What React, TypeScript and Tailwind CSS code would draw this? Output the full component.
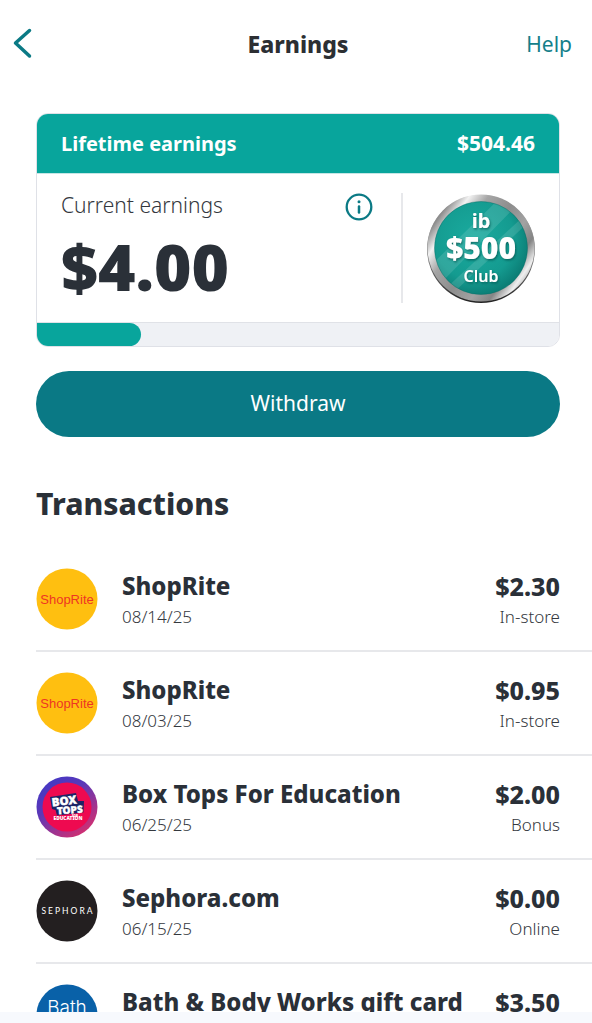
import type { ReactNode } from "react";

type Transaction = {
  id: number;
  name: string;
  date: string;
  amount: string;
  kind: string;
  logo: ReactNode;
};

function ShopRiteLogo() {
  return (
    <svg viewBox="0 0 62 62" className="size-full" aria-hidden="true">
      <circle cx="31" cy="31" r="30.5" fill="#ffbf10" />
      <text x="31" y="35.500" textAnchor="middle" fontFamily="'Liberation Sans Narrow', 'Liberation Sans', sans-serif" fontSize="13" fill="#ee3524">
        ShopRite
      </text>
    </svg>
  );
}

function BoxTopsLogo() {
  return (
    <svg viewBox="0 0 62 62" className="size-full" aria-hidden="true">
      <defs>
        <linearGradient id="boxtops-ring" x1="0.15" y1="0.1" x2="0.75" y2="0.95">
          <stop offset="0" stopColor="#4638c4" />
          <stop offset="0.35" stopColor="#5b38b8" />
          <stop offset="1" stopColor="#d02f72" />
        </linearGradient>
      </defs>
      <circle cx="31" cy="31" r="30.5" fill="url(#boxtops-ring)" />
      <circle cx="31" cy="31" r="24.5" fill="#ee0a50" />
      <path d="M14 21 L40 17 L42 25 L48 25 L47.500 36.500 L21 39.500 L19.500 34 L16 33 Z" fill="#1c2466" />
      <g fontFamily="'Noto Sans', sans-serif" fontWeight="900" fill="#ffffff" textAnchor="middle">
        <text x="28.500" y="29" fontSize="11.500" stroke="#ffffff" strokeWidth="0.4" transform="rotate(-7 28 28)">
          BOX
        </text>
        <text x="34" y="37.500" fontSize="10" stroke="#ffffff" strokeWidth="0.4" transform="rotate(-4 34 37)">
          TOPS
        </text>
        <text x="39" y="40.500" fontSize="3">
          FOR
        </text>
        <text x="32" y="44" fontSize="4.800">
          EDUCATION
        </text>
      </g>
    </svg>
  );
}

function SephoraLogo() {
  return (
    <svg viewBox="0 0 62 62" className="size-full" aria-hidden="true">
      <circle cx="31" cy="31" r="30.5" fill="#231f20" />
      <text x="32" y="34" textAnchor="middle" fontFamily="Lato, sans-serif" fontSize="8.500" letterSpacing="2" fill="#ffffff">
        SEPHORA
      </text>
    </svg>
  );
}

function BathLogo() {
  return (
    <svg viewBox="0 0 62 62" className="size-full" aria-hidden="true">
      <circle cx="31" cy="31" r="30.5" fill="#0961a8" />
      <text x="31" y="29.500" fontFamily="Inter, sans-serif" fontWeight="300" fontSize="19" textAnchor="middle" fill="#ffffff">
        Bath
      </text>
    </svg>
  );
}

function ClubBadge() {
  return (
    <svg viewBox="0 0 110 110" className="size-[110px] shrink-0" role="img" aria-label="ib $500 Club">
      <defs>
        <linearGradient id="rim" x1="0" y1="0.15" x2="1" y2="0.85">
          <stop offset="0" stopColor="#8b8b8b" />
          <stop offset="0.1" stopColor="#8d8d8d" />
          <stop offset="0.2" stopColor="#f2f2f2" />
          <stop offset="0.32" stopColor="#a5a5a5" />
          <stop offset="0.5" stopColor="#8d8d8d" />
          <stop offset="0.66" stopColor="#a2a2a2" />
          <stop offset="0.78" stopColor="#858585" />
          <stop offset="0.88" stopColor="#efefef" />
          <stop offset="1" stopColor="#777777" />
        </linearGradient>
        <linearGradient id="rim-edge" x1="0" y1="0" x2="0" y2="1">
          <stop offset="0" stopColor="#c9c9c9" />
          <stop offset="0.6" stopColor="#777777" />
          <stop offset="1" stopColor="#222222" />
        </linearGradient>
        <radialGradient id="face" cx="0.42" cy="0.4" r="0.62">
          <stop offset="0" stopColor="#1aab9f" />
          <stop offset="0.7" stopColor="#149b90" />
          <stop offset="1" stopColor="#0b7d75" />
        </radialGradient>
        <clipPath id="face-clip">
          <circle cx="55" cy="54" r="46.500" />
        </clipPath>
        <filter id="text-shadow" x="-10%" y="-10%" width="120%" height="130%">
          <feDropShadow dx="1" dy="1.500" stdDeviation="0.8" floodColor="#04534e" floodOpacity="0.7" />
        </filter>
      </defs>
      <circle cx="55" cy="55" r="54" fill="url(#rim-edge)" />
      <circle cx="55" cy="54" r="53.500" fill="url(#rim)" />
      <circle cx="55" cy="54" r="46.500" fill="url(#face)" />
      <g clipPath="url(#face-clip)" fill="#ffffff" fillOpacity="0.12">
        <path d="M0 76 L74 4 L90 12 L14 90 Z" />
        <path d="M18 96 L100 20 L105 26 L25 101 Z" />
      </g>
      <circle cx="55" cy="54" r="46.500" fill="none" stroke="#086b64" strokeOpacity="0.4" />
      <g fontFamily="'Noto Sans', sans-serif" fill="#ffffff" textAnchor="middle" filter="url(#text-shadow)">
        <text x="55" y="34" fontSize="20" fontWeight="700">
          ib
        </text>
        <text x="55" y="65" fontSize="30" fontWeight="900">
          $500
        </text>
        <text x="55" y="88" fontSize="16" fontWeight="600">
          Club
        </text>
      </g>
    </svg>
  );
}

const transactions: Transaction[] = [
  { id: 1, name: "ShopRite", date: "08/14/25", amount: "$2.30", kind: "In-store", logo: <ShopRiteLogo /> },
  { id: 2, name: "ShopRite", date: "08/03/25", amount: "$0.95", kind: "In-store", logo: <ShopRiteLogo /> },
  { id: 3, name: "Box Tops For Education", date: "06/25/25", amount: "$2.00", kind: "Bonus", logo: <BoxTopsLogo /> },
  { id: 4, name: "Sephora.com", date: "06/15/25", amount: "$0.00", kind: "Online", logo: <SephoraLogo /> },
  { id: 5, name: "Bath & Body Works gift card", date: "", amount: "$3.50", kind: "", logo: <BathLogo /> },
];

function Header() {
  return (
    <header className="grid h-[88px] shrink-0 grid-cols-[1fr_auto_1fr] items-center pr-5 pl-6">
      <button type="button" aria-label="Back" className="-ml-3 w-6 text-[#0b7a85]">
        <svg viewBox="0 0 22 32" className="h-8 w-[22px]" fill="none" stroke="currentColor" strokeWidth="3.500" strokeLinecap="round" strokeLinejoin="round">
          <path d="M17.500 2.500 L3.500 15 L17.500 28" />
        </svg>
      </button>
      <h1 className="text-[23px] leading-8 font-extrabold text-[#2c2f33]">Earnings</h1>
      <a href="#help" className="justify-self-end pt-0.5 text-[21px] text-[#14808a]">
        Help
      </a>
    </header>
  );
}

function EarningsCard() {
  return (
    <section className="overflow-hidden rounded-xl border border-[#dfe1e7]">
      <div className="flex h-[60px] items-center justify-between border-b border-[#c5e6e5] bg-[#08a59c] px-6 text-xl font-bold text-white">
        <h2>Lifetime earnings</h2>
        <span className="text-[21px]">$504.46</span>
      </div>
      <div className="flex h-[148px] items-center">
        <div className="flex h-[110px] flex-1 justify-between border-r-2 border-[#e7e8eb] pr-7 pl-6">
          <div>
            <h2 className="text-[21px] leading-6 font-light text-[#34383e]">Current earnings</h2>
            <p className="mt-4 text-[64px] leading-[68px] font-black text-[#2a3038]">$4.00</p>
          </div>
          <button type="button" aria-label="About current earnings" className="size-7 text-[#0b7a85]">
            <svg viewBox="0 0 28 28" fill="none" stroke="currentColor" strokeLinecap="round">
              <circle cx="14" cy="14" r="12.300" strokeWidth="2.300" />
              <path d="M14 13.500 V19.500" strokeWidth="2.500" />
              <circle cx="14" cy="8.700" r="1.500" fill="currentColor" stroke="none" />
            </svg>
          </button>
        </div>
        <div className="px-[23px] pt-0.5">
          <ClubBadge />
        </div>
      </div>
      <div className="h-6 border-t border-[#e0e2e7] bg-[#eff1f5]" role="progressbar" aria-label="Earnings progress" aria-valuenow={20} aria-valuemin={0} aria-valuemax={100}>
        <div className="h-full rounded-r-xl bg-[#08a59c]" style={{ width: "20%" }} />
      </div>
    </section>
  );
}

function TransactionRow({ item }: { item: Transaction }) {
  return (
    <li className="flex h-[104px] shrink-0 items-center gap-6 border-b-2 border-[#e7e8eb] pr-8">
      <div className="size-[62px] shrink-0">{item.logo}</div>
      <div className="min-w-0 flex-1 pt-0.5">
        <p className="truncate text-2xl leading-9 font-extrabold text-[#2a3038]">{item.name}</p>
        <p className="h-7 text-[17px] leading-[26px] font-light text-[#34383e]">{item.date}</p>
      </div>
      <div className="pt-0.5 text-right">
        <p className="text-[25px] leading-9 font-extrabold text-[#2a3038]">{item.amount}</p>
        <p className="h-7 text-[17px] leading-[26px] font-light text-[#34383e]">{item.kind}</p>
      </div>
    </li>
  );
}

export default function App() {
  return (
    <div className="flex h-screen flex-col bg-white font-['Noto_Sans',sans-serif]">
      <Header />
      <main className="min-h-0 flex-1 overflow-y-auto pt-[25px] [scrollbar-width:none]">
        <div className="pr-8 pl-9">
          <EarningsCard />
          <button type="button" className="mt-6 h-[66px] w-full rounded-full bg-[#0a7985] text-[21px] text-white">
            Withdraw
          </button>
        </div>
        <h2 className="mt-[47px] pl-9 text-[30px] leading-10 font-extrabold text-[#2a3038]">Transactions</h2>
        <ul className="mt-6 pl-9">
          {transactions.map((item) => (
            <TransactionRow key={item.id} item={item} />
          ))}
        </ul>
      </main>
      <div className="h-[11px] shrink-0 bg-[#f7f9fd]" />
    </div>
  );
}
